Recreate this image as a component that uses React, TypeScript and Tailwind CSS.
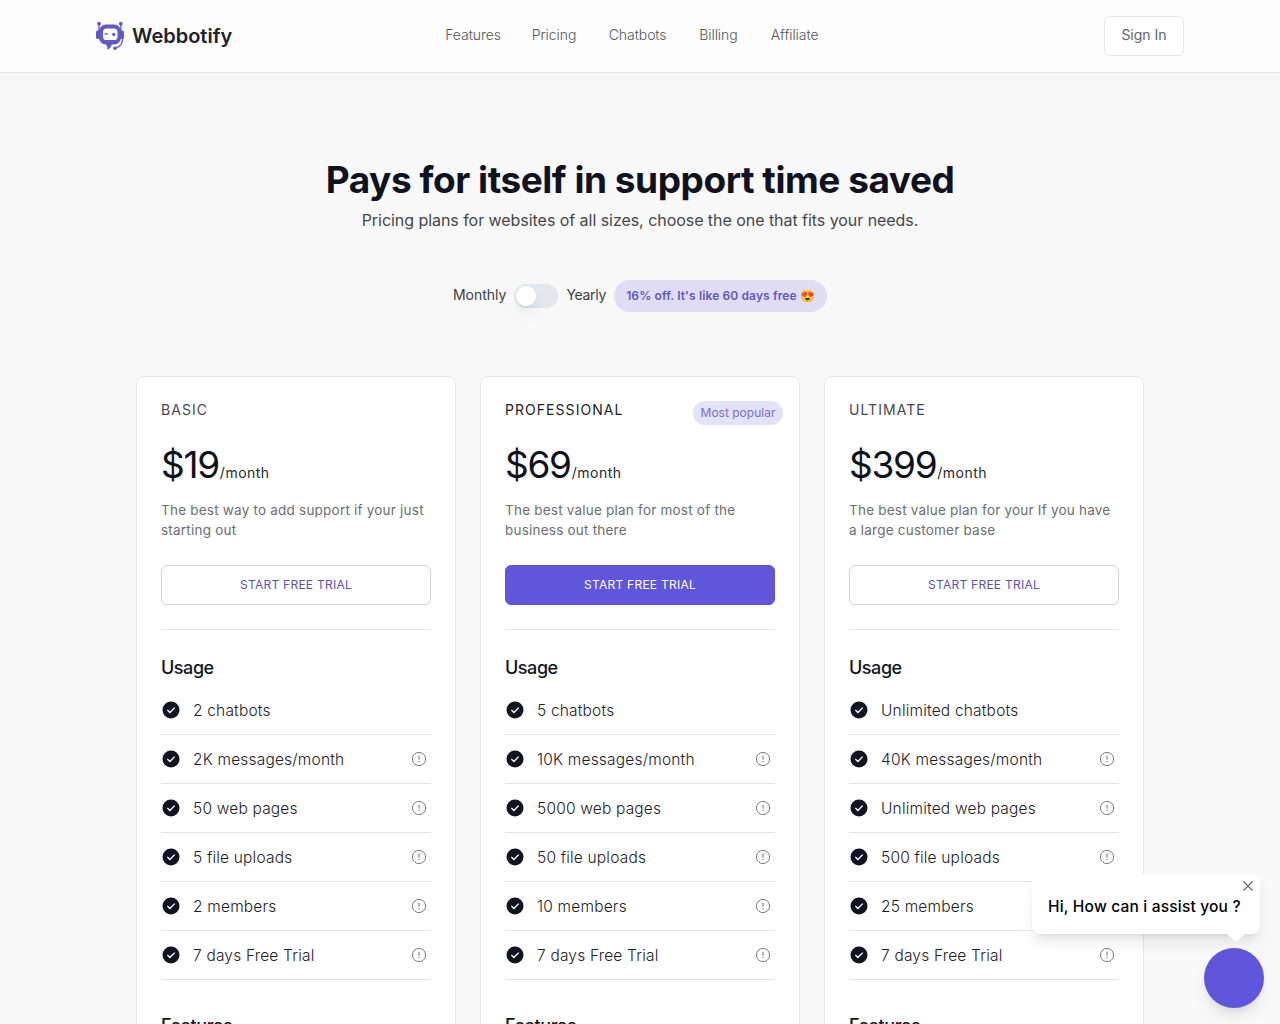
import { useState } from "react";

type Feature = { label: string; info?: boolean };

type Plan = {
  name: string;
  price: string;
  description: string;
  popular?: boolean;
  usage: Feature[];
};

const NAV = [
  { label: "Features", cls: "w-[54.5px]" },
  { label: "Pricing", cls: "w-[45px]" },
  { label: "Chatbots", cls: "w-[58.5px]" },
  { label: "Billing", cls: "w-[39.5px]" },
  { label: "Affiliate", cls: "w-[49px]" },
];

const PLANS: Plan[] = [
  {
    name: "Basic",
    price: "$19",
    description: "The best way to add support if your just starting out",
    usage: [
      { label: "2 chatbots" },
      { label: "2K messages/month", info: true },
      { label: "50 web pages", info: true },
      { label: "5 file uploads", info: true },
      { label: "2 members", info: true },
      { label: "7 days Free Trial", info: true },
    ],
  },
  {
    name: "Professional",
    price: "$69",
    description: "The best value plan for most of the business out there",
    popular: true,
    usage: [
      { label: "5 chatbots" },
      { label: "10K messages/month", info: true },
      { label: "5000 web pages", info: true },
      { label: "50 file uploads", info: true },
      { label: "10 members", info: true },
      { label: "7 days Free Trial", info: true },
    ],
  },
  {
    name: "Ultimate",
    price: "$399",
    description: "The best value plan for your If you have a large customer base",
    usage: [
      { label: "Unlimited chatbots" },
      { label: "40K messages/month", info: true },
      { label: "Unlimited web pages", info: true },
      { label: "500 file uploads", info: true },
      { label: "25 members", info: true },
      { label: "7 days Free Trial", info: true },
    ],
  },
];

function Logo() {
  return (
    <svg width="29" height="32" viewBox="0 0 29 32" fill="none">
      <g stroke="#6a5fcb" strokeWidth="1.4">
        <path d="M3 4v8M24.8 4v8" />
        <path d="M26.6 18c.3 5-2.600 9-7 10.200" />
      </g>
      <g fill="#6358c8">
        <circle cx="3" cy="3.700" r="1.900" />
        <circle cx="24.800" cy="3.700" r="1.900" />
        <rect x="0" y="10.500" width="5" height="8.500" rx="1.800" />
        <rect x="23" y="10.500" width="5" height="8.500" rx="1.800" />
        <path d="M10 4.500h8a7 7 0 0 1 7 7v6a7 7 0 0 1-7 7h-2.200c-.6 2.400-2.200 4.400-4.600 5.200.5-1.800.1-3.700-1.400-5.200a7 7 0 0 1-6.800-7v-6a7 7 0 0 1 7-7z" />
        <circle cx="19" cy="28.300" r="1.800" />
      </g>
      <rect x="7" y="8.500" width="14.500" height="11.500" rx="3.600" fill="#fdfdfd" />
      <path d="M8.800 14.600c.6-1.300 2.400-1.300 3 0" stroke="#6358c8" strokeWidth="1.1" />
      <circle cx="17.700" cy="14.400" r="1.600" fill="#6358c8" />
    </svg>
  );
}

function CheckIcon() {
  return (
    <svg width="20" height="20" viewBox="0 0 20 20" fill="none" className="shrink-0">
      <circle cx="10" cy="10" r="8.500" fill="#111320" />
      <path d="M6.400 10l2.500 2.500 4.800-4.900" stroke="#fff" strokeWidth="1.300" />
    </svg>
  );
}

function InfoIcon() {
  return (
    <svg width="16" height="16" viewBox="0 0 16 16" fill="none" stroke="#7b7b7f">
      <circle cx="8" cy="8" r="6.600" strokeWidth="1" />
      <path d="M8 4.800v4M8 10.100v1.200" strokeWidth="1.100" />
    </svg>
  );
}

function Header() {
  return (
    <header className="h-[73px] bg-[#fdfdfd] border-b border-[#e8e8e8]">
      <div className="mx-auto flex h-[72px] w-[1088px] items-center justify-between">
        <a className="flex w-[324px] items-center gap-[7px]">
          <Logo />
          <span className="text-[20px] leading-7 font-semibold text-[#20222b]">Webbotify</span>
        </a>
        <nav className="flex gap-8 pr-[15px] pb-0.5 text-sm font-light text-[#55565c]">
          {NAV.map((item) => (
            <a key={item.label} className={`${item.cls} whitespace-nowrap tracking-[-0.005em]`}>{item.label}</a>
          ))}
        </nav>
        <div className="flex w-[324px] justify-end">
          <button className="h-10 w-20 rounded-md border border-[#e6e6e8] bg-white pb-0.5 text-sm text-[#62636a]">
            Sign In
          </button>
        </div>
      </div>
    </header>
  );
}

function PlanCard({ plan }: { plan: Plan }) {
  return (
    <div className="w-80 rounded-lg border border-[#e5e6e9] bg-white px-6 pt-[23px]">
      <div className="flex h-6 justify-between">
        <h2 className={`text-sm leading-5 tracking-[0.075em] uppercase ${plan.popular ? "text-[#1b1d28]" : "text-[#45474f]"}`}>
          {plan.name}
        </h2>
        {plan.popular && (
          <span className="mt-px -mr-2 h-6 w-[90px] rounded-full bg-[#e4e1fa] text-center text-xs leading-6 text-[#7a70c9]">
            Most popular
          </span>
        )}
      </div>
      <p className="mt-[17px] flex h-12 items-baseline text-[#0f111c]">
        <span className="text-[37px] leading-[48px] tracking-[-0.035em]">{plan.price}</span>
        <span className="ml-px text-sm tracking-[0.035em] text-[#26282f]">/month</span>
      </p>
      <p className="mt-[11px] h-10 pr-1.5 text-[13.500px] leading-5 tracking-[0.016em] text-[#6c6d73]">{plan.description}</p>
      <button
        className={`mt-[25px] h-10 w-full rounded-md border text-xs tracking-[0.022em] uppercase ${
          plan.popular ? "border-[#5f56dc] bg-[#5f56dc] text-white" : "border-[#d3d4d9] bg-white text-[#5b4fc0]"
        }`}
      >
        Start free trial
      </button>
      <div className="mt-6 border-t border-[#e1e2e6] pt-6">
        <h3 className="text-lg leading-7 font-medium tracking-[-0.025em] text-[#14161f]">Usage</h3>
        <ul className="mt-1">
          {plan.usage.map((item) => (
            <li key={item.label} className="flex h-[49px] items-center border-b border-[#e1e2e6] pr-1">
              <CheckIcon />
              <span className="ml-3 grow pt-0.5 text-[15.500px] font-light tracking-[0.012em] text-[#1e2028]">{item.label}</span>
              {item.info && <InfoIcon />}
            </li>
          ))}
        </ul>
        <h3 className="mt-8 text-lg leading-7 font-medium tracking-[-0.025em] text-[#14161f]">Features</h3>
      </div>
    </div>
  );
}

function ChatWidget({ onClose, open }: { onClose: () => void; open: boolean }) {
  return (
    <>
      {open && (
        <div className="absolute top-[874px] left-[1032px] h-[60px] w-[228px] rounded-lg bg-white px-4 pt-[21px] shadow-lg">
          <p className="text-[15.500px] leading-6 font-medium tracking-[0.012em] whitespace-nowrap text-black">Hi, How can i assist you ?</p>
          <button onClick={onClose} className="absolute top-[7px] right-[7px]">
            <svg width="10" height="10" viewBox="0 0 10 10" stroke="#666" strokeWidth="1.200">
              <path d="M.5.5l9 9M9.500.5l-9 9" />
            </svg>
          </button>
          <svg width="20" height="9" viewBox="0 0 20 9" className="absolute top-[59px] right-[14px]" fill="#fff">
            <path d="M0 0h20l-8 7.500q-2 1.500-4 0z" />
          </svg>
        </div>
      )}
      <button className="absolute top-[948px] left-[1204px] size-[60px] rounded-full bg-[#5f56dc] shadow-lg" />
    </>
  );
}

export default function App() {
  const [yearly, setYearly] = useState(false);
  const [chatOpen, setChatOpen] = useState(true);

  return (
    <div className="relative h-screen w-full overflow-hidden bg-[#f8f8f8] font-['Inter','Liberation_Sans',sans-serif] antialiased">
      <Header />

      <section className="pt-[83px] text-center">
        <h1 className="text-[37px] leading-[48px] font-bold tracking-[-0.0125em] text-[#10121f]">
          Pays for itself in support time saved
        </h1>
        <p className="mt-1 text-base leading-6 tracking-[-0.003em] text-[#45464d]">
          Pricing plans for websites of all sizes, choose the one that fits your needs.
        </p>
      </section>

      <div className="mt-12 flex h-8 items-center justify-center gap-2 text-sm text-[#3c3e45]">
        <span className="pb-0.5">Monthly</span>
        <button
          onClick={() => setYearly(!yearly)}
          className={`flex h-6 w-11 items-center rounded-full bg-[#e2e7ee] px-0.5 ${yearly ? "justify-end" : ""}`}
        >
          <span className="size-5 rounded-full bg-white shadow-lg" />
        </button>
        <span className="pb-0.5 tracking-[-0.02em]">Yearly</span>
        <span className="h-8 w-[213px] rounded-full bg-[#e0ddf3] text-center text-xs leading-8 font-semibold tracking-[0.01em] text-[#6256c8]">
          16% off. It's like 60 days free 😍
        </span>
      </div>

      <main className="mt-16 flex justify-center gap-6">
        {PLANS.map((plan) => (
          <PlanCard key={plan.name} plan={plan} />
        ))}
      </main>

      <ChatWidget open={chatOpen} onClose={() => setChatOpen(false)} />
    </div>
  );
}
